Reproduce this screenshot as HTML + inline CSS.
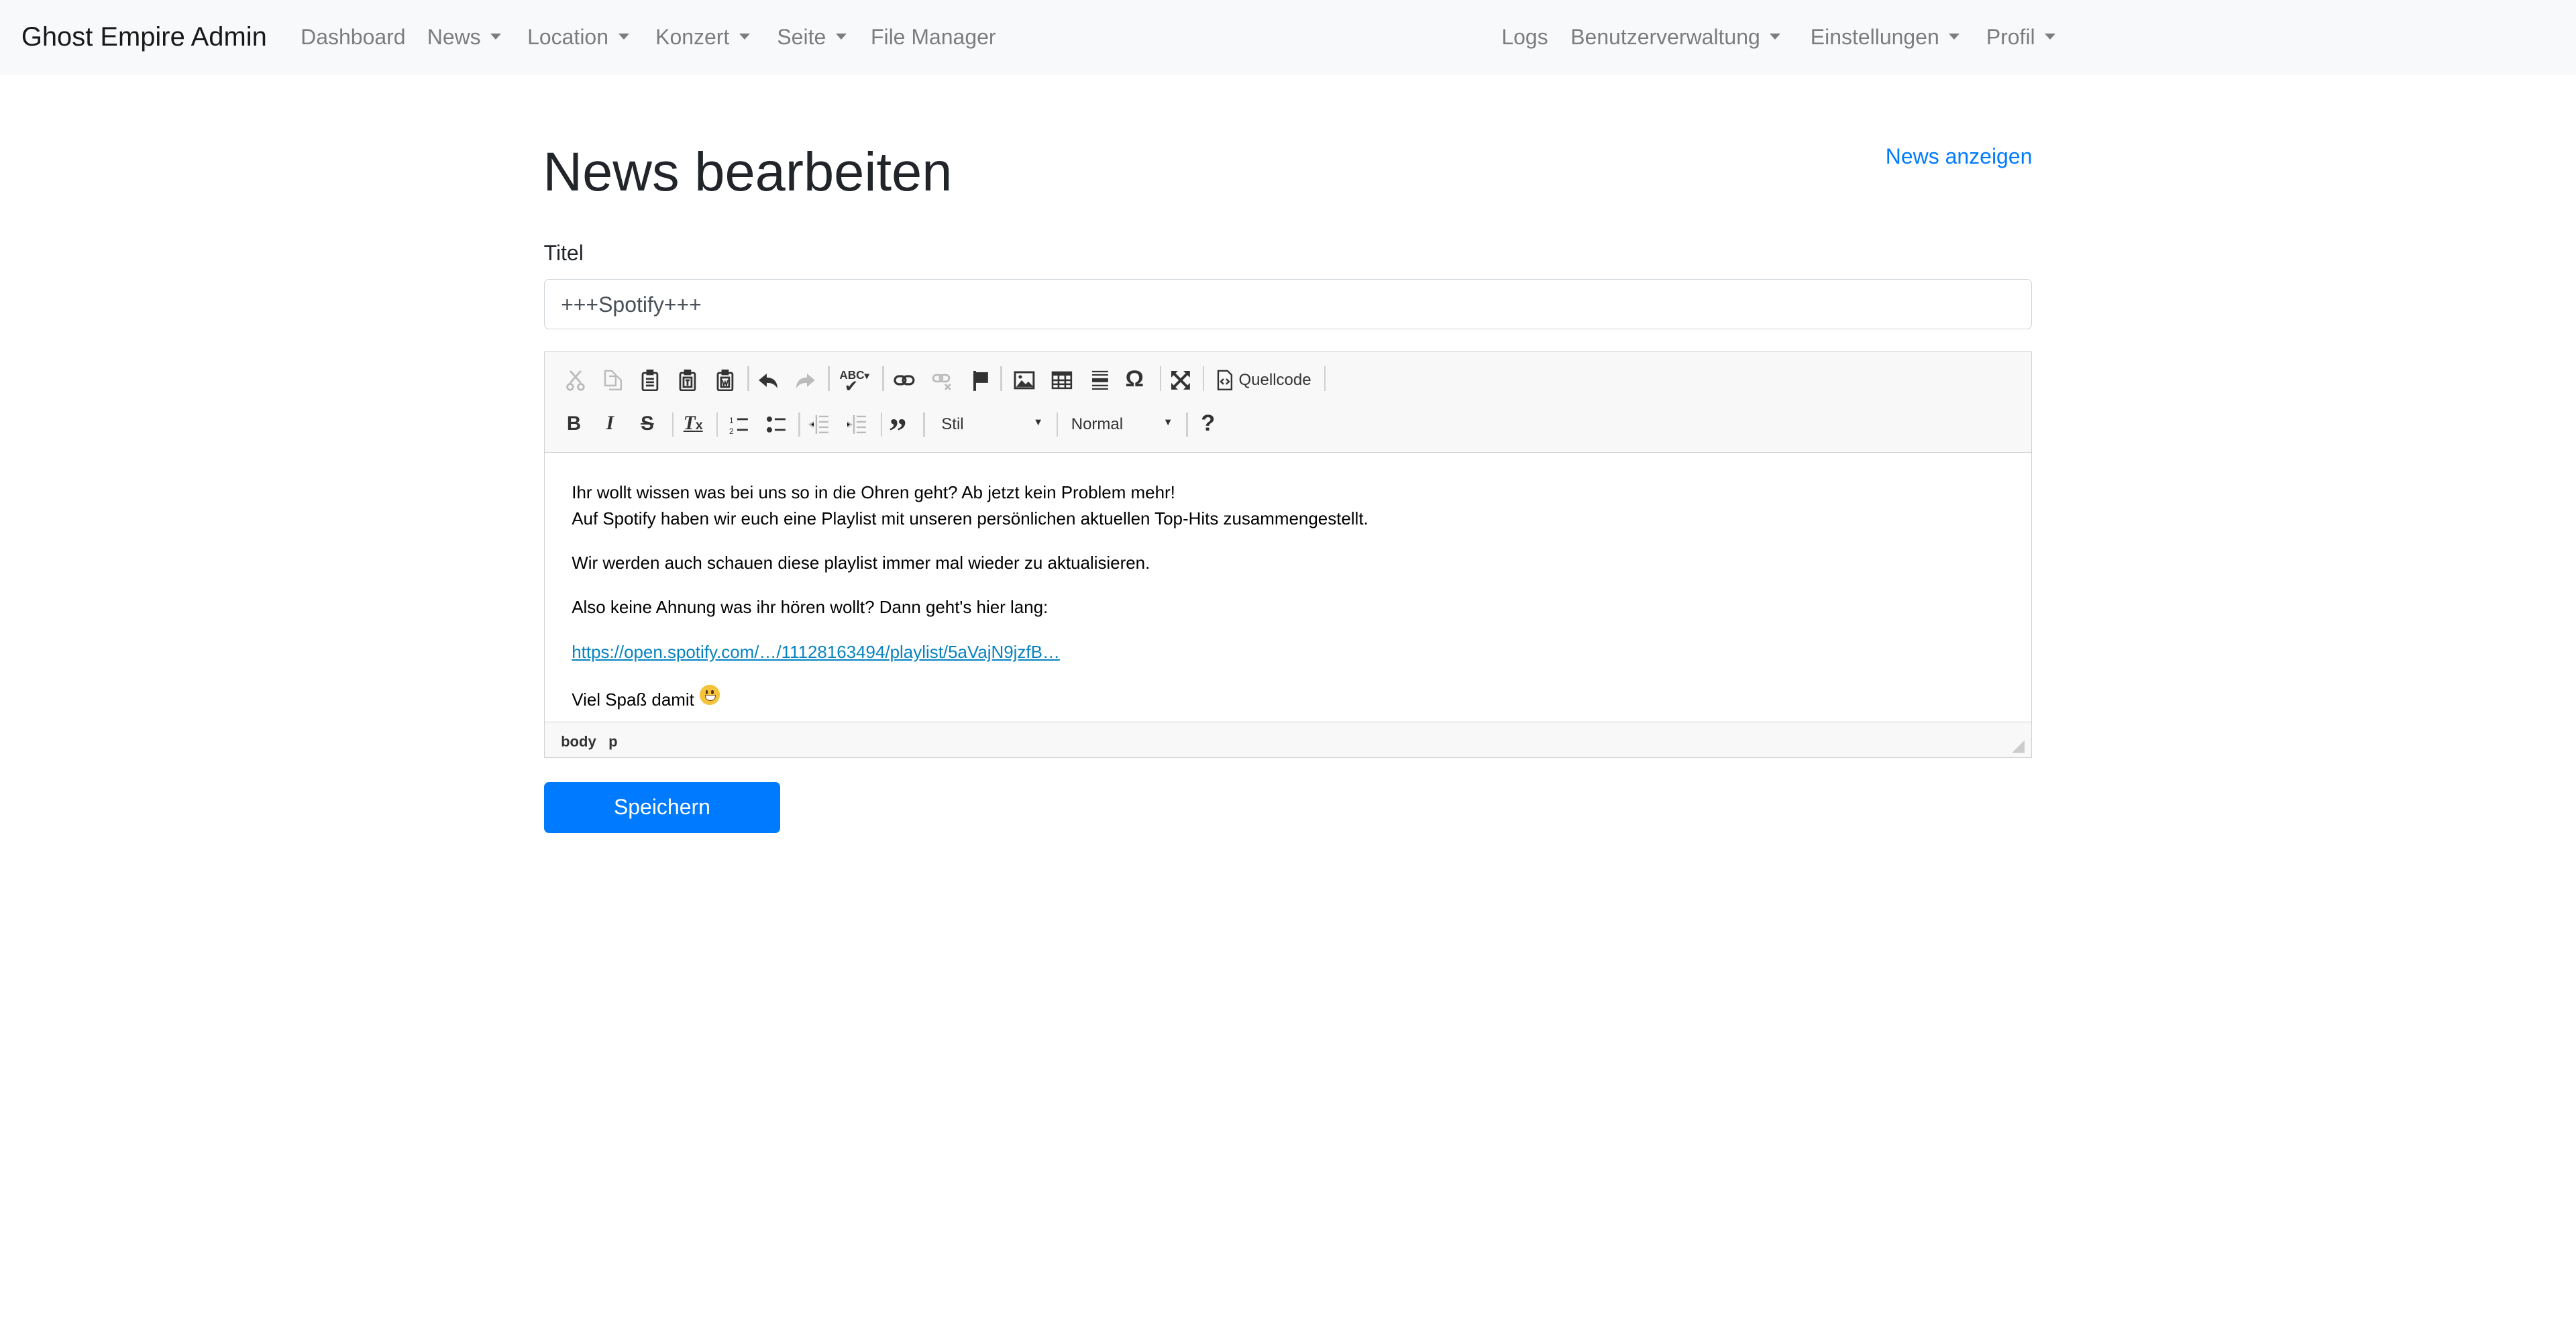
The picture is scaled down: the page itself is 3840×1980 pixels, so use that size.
<!DOCTYPE html>
<html><head><meta charset="utf-8"><style>
html{zoom:2.44898}
body{margin:0;width:1568px;height:808.5px;position:relative;background:#fff;font-family:"Liberation Sans",Arial,sans-serif;overflow:hidden}
.a{position:absolute;white-space:nowrap}
.nav{position:absolute;left:0;top:0;width:1568px;height:45.7px;background:#f8f9fa}
.nl{position:absolute;top:0;line-height:45.7px;font-size:13.06px;color:rgba(0,0,0,.5)}
.nl.c:after{content:"";display:inline-block;margin-left:6px;vertical-align:3px;border-top:4px solid rgba(0,0,0,.5);border-left:3.5px solid transparent;border-right:3.5px solid transparent}
.ic{position:absolute;width:13px;height:13px}
.sep{position:absolute;width:1px;height:15px;background:#d0d0d0}
.p{position:absolute;left:348px;font-size:10.6px;color:#000;white-space:nowrap;line-height:13px}
</style></head><body>
<div class="nav">
<div class="nl" style="left:13px;font-size:16.3px;color:rgba(0,0,0,.9)">Ghost Empire Admin</div>
<div class="nl" style="left:183px">Dashboard</div>
<div class="nl c" style="left:260px">News</div>
<div class="nl c" style="left:321px">Location</div>
<div class="nl c" style="left:399px">Konzert</div>
<div class="nl c" style="left:473px">Seite</div>
<div class="nl" style="left:530px">File Manager</div>
<div class="nl" style="left:914px">Logs</div>
<div class="nl c" style="left:956px">Benutzerverwaltung</div>
<div class="nl c" style="left:1102px">Einstellungen</div>
<div class="nl c" style="left:1209px">Profil</div>
</div>
<div class="a" style="left:330.5px;top:85px;font-size:33.2px;line-height:40px;color:#212529;font-weight:500">News bearbeiten</div>
<div class="a" style="right:331px;top:87.5px;font-size:13.06px;line-height:16px;color:#007bff">News anzeigen</div>
<div class="a" style="left:331px;top:146px;font-size:13.06px;line-height:16px;color:#212529">Titel</div>
<div class="a" style="left:331px;top:170px;width:905px;height:29.5px;border:0.8px solid #ced4da;border-radius:3px;font-size:13.06px;line-height:30.5px;color:#495057;text-indent:10px">+++Spotify+++</div>

<div class="a" style="left:331px;top:214px;width:905px;height:246.5px;border:0.8px solid #d1d1d1;background:#fff;overflow:hidden">
 <div class="a" style="left:0;top:0;width:905px;height:61px;background:#f8f8f8;border-bottom:0.8px solid #d1d1d1"></div>
 <div class="a" style="left:0;top:225px;width:905px;height:22px;background:#f8f8f8;border-top:0.8px solid #d1d1d1"></div>
 <div class="a" style="left:10px;top:231px;font-size:9px;font-weight:bold;color:#333;line-height:12px">body&nbsp;&nbsp;&nbsp;p</div>
 <svg class="a" style="left:893px;top:236px" width="8" height="8"><path d="M8 0L0 8H8Z" fill="#ccc"/></svg>
</div>

<!-- toolbar row 1 -->
<svg class="ic" style="left:344px;top:225px" viewBox="0 0 16 16" fill="none" stroke="#bbb" stroke-width="1.4"><path d="M4 1l8 9M12 1L4 10"/><circle cx="4" cy="13" r="2.2"/><circle cx="12" cy="13" r="2.2"/></svg>
<svg class="ic" style="left:366px;top:225px" viewBox="0 0 16 16" fill="none" stroke="#bbb" stroke-width="1.2"><path d="M3 1h5l3 3v8H3zM6 5h6l3 3v7H6"/></svg>
<svg class="ic" style="left:389px;top:225px" viewBox="0 0 16 16" fill="none" stroke="#333" stroke-width="1.4"><rect x="2.5" y="2.5" width="11" height="13" rx="1"/><rect x="6" y="0.5" width="4" height="3" fill="#333"/><path d="M5 7h6M5 9.5h6M5 12h6"/></svg>
<svg class="ic" style="left:412px;top:225px" viewBox="0 0 16 16" fill="none" stroke="#333" stroke-width="1.4"><rect x="2.5" y="2.5" width="11" height="13" rx="1"/><rect x="6" y="0.5" width="4" height="3" fill="#333"/><rect x="5" y="6" width="6" height="7"/><path d="M6.5 8h3M8 8v4"/></svg>
<svg class="ic" style="left:435px;top:225px" viewBox="0 0 16 16" fill="none" stroke="#333" stroke-width="1.4"><rect x="2.5" y="2.5" width="11" height="13" rx="1"/><rect x="6" y="0.5" width="4" height="3" fill="#333"/><rect x="5" y="6" width="6" height="7"/><path d="M6 8l1 4 1-3 1 3 1-4" stroke-width="0.9"/></svg>
<div class="sep" style="left:455px;top:223px"></div>
<svg class="ic" style="left:461px;top:225px" viewBox="0 0 16 16"><path d="M1 8l6-5v3c5 0 8 3 8 8-2-3-4-4-8-4v3z" fill="#333"/></svg>
<svg class="ic" style="left:484px;top:225px" viewBox="0 0 16 16"><path d="M15 8L9 3v3C4 6 1 9 1 14c2-3 4-4 8-4v3z" fill="#bbb"/></svg>
<div class="sep" style="left:504px;top:223px"></div>
<div class="a" style="left:511px;top:224px;font-size:7px;font-weight:bold;color:#333">ABC<span style="font-size:6px">▾</span></div>
<div class="a" style="left:514px;top:229px;font-size:10px;color:#333">✔</div>
<div class="sep" style="left:537px;top:223px"></div>
<svg class="ic" style="left:544px;top:225px" viewBox="0 0 16 16" fill="none" stroke="#333" stroke-width="1.6"><rect x="1" y="5" width="8" height="6" rx="3"/><rect x="7" y="5" width="8" height="6" rx="3"/></svg>
<svg class="ic" style="left:567px;top:225px" viewBox="0 0 16 16" fill="none" stroke="#bbb" stroke-width="1.4"><rect x="1" y="4" width="7" height="5" rx="2.5"/><rect x="6" y="4" width="7" height="5" rx="2.5"/><path d="M10 11l4 4M14 11l-4 4"/></svg>
<svg class="ic" style="left:590px;top:225px" viewBox="0 0 16 16"><path d="M3 1h2v15H3zM5 2h9v8H5z" fill="#333"/></svg>
<div class="sep" style="left:609px;top:223px"></div>
<svg class="ic" style="left:617px;top:225px" viewBox="0 0 16 16"><rect x="1" y="2" width="14" height="12" fill="none" stroke="#333" stroke-width="1.5"/><path d="M2 13l4-5 3 3 2-2 4 4z" fill="#333"/><circle cx="5" cy="5.5" r="1.3" fill="#333"/></svg>
<svg class="ic" style="left:640px;top:225px" viewBox="0 0 16 16" fill="none" stroke="#333" stroke-width="1.3"><rect x="1" y="2" width="14" height="12"/><path d="M1 3h14" stroke-width="3"/><path d="M1 8h14M1 11h14M5.5 2v12M10.5 2v12"/></svg>
<svg class="ic" style="left:663px;top:225px" viewBox="0 0 16 16" stroke="#333" stroke-width="1.1"><path d="M2 1.5h12M2 4h12M2 12h12M2 14.5h12"/><path d="M2 8h12" stroke-width="3"/></svg>
<div class="a" style="left:685px;top:223px;font-size:14px;font-weight:bold;color:#333">Ω</div>
<div class="sep" style="left:706px;top:223px"></div>
<svg class="ic" style="left:712px;top:225px" viewBox="0 0 16 16" fill="#333"><path d="M1 1h5L1 6zM15 1v5l-5-5zM1 15v-5l5 5zM15 15h-5l5-5z"/><path d="M3 3l10 10M13 3L3 13" stroke="#333" stroke-width="2"/></svg>
<div class="sep" style="left:732px;top:223px"></div>
<svg class="ic" style="left:739px;top:225px" viewBox="0 0 16 16" fill="none" stroke="#333" stroke-width="1.2"><path d="M3 1h7l3 3v11H3z"/><path d="M7 7l-2 2 2 2M9 7l2 2-2 2"/></svg>
<div class="a" style="left:754px;top:225.5px;font-size:9.8px;line-height:12px;color:#333">Quellcode</div>
<div class="sep" style="left:806px;top:223px"></div>

<!-- row 2 -->
<div class="a" style="left:345px;top:251px;font-size:12px;font-weight:bold;color:#333">B</div>
<div class="a" style="left:369px;top:251px;font-size:12px;font-weight:bold;font-style:italic;color:#333;font-family:'Liberation Serif',serif">I</div>
<div class="a" style="left:390px;top:251px;font-size:12px;font-weight:bold;color:#333;text-decoration:line-through">S</div>
<div class="sep" style="left:409px;top:251px"></div>
<div class="a" style="left:416px;top:251px;font-size:12px;font-weight:bold;font-style:italic;color:#333;text-decoration:underline;font-family:'Liberation Serif',serif">T<span style="font-size:8px;font-style:normal;font-family:'Liberation Sans'">x</span></div>
<div class="sep" style="left:436px;top:251px"></div>
<svg class="ic" style="left:443px;top:252px" viewBox="0 0 16 16" stroke="#333" stroke-width="1.4"><path d="M7 4h8M7 12h8"/><text x="1" y="7" font-size="6" fill="#333" stroke="none">1</text><text x="1" y="15" font-size="6" fill="#333" stroke="none">2</text></svg>
<svg class="ic" style="left:466px;top:252px" viewBox="0 0 16 16" stroke="#333" stroke-width="1.4"><path d="M7 4h8M7 12h8"/><circle cx="3" cy="4" r="2" fill="#333" stroke="none"/><circle cx="3" cy="12" r="2" fill="#333" stroke="none"/></svg>
<div class="sep" style="left:486px;top:251px"></div>
<svg class="ic" style="left:492px;top:252px" viewBox="0 0 16 16" stroke="#bbb" stroke-width="1.2"><path d="M8 2h7M8 6h7M8 10h7M8 14h7M6 1v14M4 6L1 8l3 2"/></svg>
<svg class="ic" style="left:515px;top:252px" viewBox="0 0 16 16" stroke="#bbb" stroke-width="1.2"><path d="M8 2h7M8 6h7M8 10h7M8 14h7M6 1v14M1 6l3 2-3 2"/></svg>
<div class="sep" style="left:536px;top:251px"></div>
<div class="a" style="left:541px;top:250px;font-size:22px;font-weight:bold;color:#333;font-family:'Liberation Serif',serif;line-height:26px">”</div>
<div class="sep" style="left:562px;top:251px"></div>
<div class="a" style="left:573px;top:252.5px;font-size:9.8px;line-height:12px;color:#333">Stil</div>
<div class="a" style="left:629px;top:254px;font-size:6px;color:#333">▼</div>
<div class="sep" style="left:643px;top:251px"></div>
<div class="a" style="left:652px;top:252.5px;font-size:9.8px;line-height:12px;color:#333">Normal</div>
<div class="a" style="left:708px;top:254px;font-size:6px;color:#333">▼</div>
<div class="sep" style="left:722px;top:251px"></div>
<div class="a" style="left:731px;top:250px;font-size:14px;font-weight:bold;color:#333">?</div>

<!-- content -->
<div class="p" style="top:294px">Ihr wollt wissen was bei uns so in die Ohren geht? Ab jetzt kein Problem mehr!</div>
<div class="p" style="top:310px">Auf Spotify haben wir euch eine Playlist mit unseren persönlichen aktuellen Top-Hits zusammengestellt.</div>
<div class="p" style="top:337px">Wir werden auch schauen diese playlist immer mal wieder zu aktualisieren.</div>
<div class="p" style="top:364px">Also keine Ahnung was ihr hören wollt? Dann geht's hier lang:</div>
<div class="p" style="top:391px;color:#0782c1;text-decoration:underline">https://open.spotify.com/…/11128163494/playlist/5aVajN9jzfB…</div>
<div class="p" style="top:420px">Viel Spaß damit</div>
<span class="a" style="left:426px;top:417px;width:12px;height:12px;border-radius:50%;background:#f5c33b"><span style="position:absolute;left:3px;top:6px;width:6px;height:3px;background:#fff;border:0.6px solid #7a4a10;border-radius:0 0 3px 3px"></span><span style="position:absolute;left:3.5px;top:3px;width:1.5px;height:2.5px;background:#5a3a10;border-radius:1px"></span><span style="position:absolute;left:7px;top:3px;width:1.5px;height:2.5px;background:#5a3a10;border-radius:1px"></span></span>

<div class="a" style="left:331px;top:476px;width:144px;height:31px;background:#007bff;border-radius:3px;color:#fff;font-size:13.06px;line-height:31px;text-align:center">Speichern</div>
</body></html>
